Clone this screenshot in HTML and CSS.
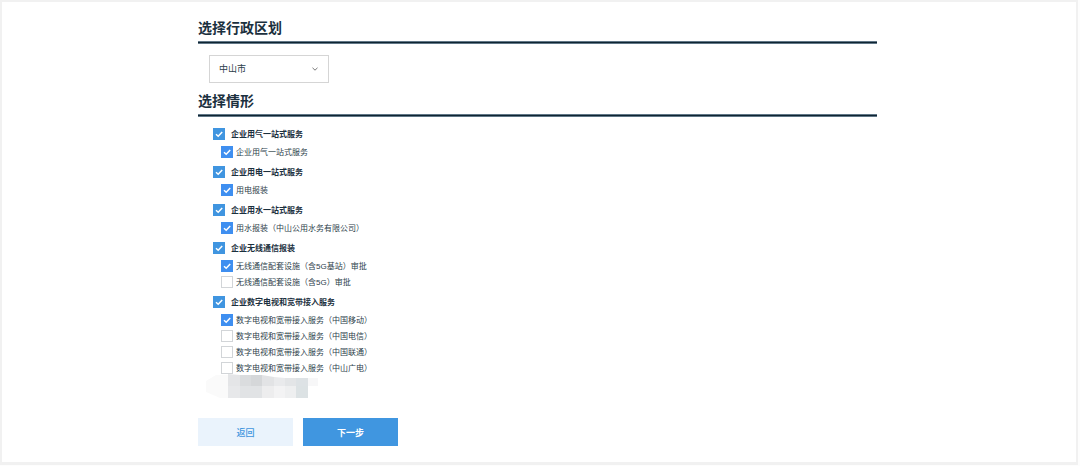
FILE: index.html
```html
<!DOCTYPE html>
<html lang="zh-CN">
<head>
    <meta charset="UTF-8">
    <meta name="viewport" content="width=device-width, initial-scale=1.0">
    <title>选择情形</title>
    <link rel="stylesheet" href="styles.css">
</head>
<body>
    <form class="panel">
        <h2 class="section-title"><label for="region">选择行政区划</label></h2>
        <div class="region">
            <select id="region" class="region-select">
                <option>中山市</option>
            </select>
            <svg class="region-arrow" viewBox="0 0 8 8"><path d="M1.5 2.8 L4 5.2 L6.5 2.8" /></svg>
        </div>

        <h2 class="section-title">选择情形</h2>
        <div class="groups">
            <div class="group">
                <label class="group-title"><input type="checkbox" class="check" checked>企业用气一站式服务</label>
                <label class="item"><input type="checkbox" class="check" checked>企业用气一站式服务</label>
            </div>
            <div class="group">
                <label class="group-title"><input type="checkbox" class="check" checked>企业用电一站式服务</label>
                <label class="item"><input type="checkbox" class="check" checked>用电报装</label>
            </div>
            <div class="group">
                <label class="group-title"><input type="checkbox" class="check" checked>企业用水一站式服务</label>
                <label class="item"><input type="checkbox" class="check" checked>用水报装（中山公用水务有限公司）</label>
            </div>
            <div class="group">
                <label class="group-title"><input type="checkbox" class="check" checked>企业无线通信报装</label>
                <label class="item"><input type="checkbox" class="check" checked>无线通信配套设施（含5G基站）审批</label>
                <label class="item"><input type="checkbox" class="check">无线通信配套设施（含5G）审批</label>
            </div>
            <div class="group">
                <label class="group-title"><input type="checkbox" class="check" checked>企业数字电视和宽带接入服务</label>
                <label class="item"><input type="checkbox" class="check" checked>数字电视和宽带接入服务（中国移动）</label>
                <label class="item"><input type="checkbox" class="check">数字电视和宽带接入服务（中国电信）</label>
                <label class="item"><input type="checkbox" class="check">数字电视和宽带接入服务（中国联通）</label>
                <label class="item"><input type="checkbox" class="check">数字电视和宽带接入服务（中山广电）</label>
            </div>
        </div>

        <!-- masked row -->
        <svg class="mosaic" viewBox="0 0 114 24">
            <path fill="#fafafa" d="M0 7 L10 1 H22 V24 H14 L0 18z" />
            <path fill="#e4e5e7" d="M22 0 L34 1 V12 H22z" />
            <path fill="#dadcde" d="M34 1 H45 V12 H34z" />
            <path fill="#d5d7d9" d="M45 1 H56 V12 H45z" />
            <path fill="#e2e3e5" d="M56 1 L68 3 V12 H56z" />
            <path fill="#e9eaec" d="M68 3 L79 4 V12 H68z" />
            <path fill="#e3e5e7" d="M79 4 H90 V12 H79z" />
            <path fill="#dde2e5" d="M90 4 H102 V12 H90z" />
            <path fill="#f7f7f8" d="M102 4 H112 V12 H102z" />
            <path fill="#e7e8ea" d="M22 12 H34 V24 H22z" />
            <path fill="#e1e3e5" d="M34 12 H56 V24 H34z" />
            <path fill="#ededee" d="M56 12 H68 V24 H56z" />
            <path fill="#f3f3f4" d="M68 12 H79 V24 H68z" />
            <path fill="#eeeff0" d="M79 12 H90 V24 H79z" />
            <path fill="#dce2e4" d="M90 12 H102 V24 H90z" />
        </svg>

        <div class="actions">
            <button type="button" class="btn btn-back">返回</button>
            <button type="button" class="btn btn-next">下一步</button>
        </div>
    </form>
</body>
</html>
```
FILE: styles.css
```css
* {
    box-sizing: border-box;
}
body {
    margin: 0;
    padding: 0 2px 1px 0;
    font-family: "Liberation Sans", "Noto Sans CJK SC", sans-serif;
    color: #1b303e;
    background: #fdfdfd;
}
.panel {
    padding: 16px 199px 16px 196px;
    border: 2px solid #f1f1f1;
    border-bottom-width: 3px;
    background: #fff;
}
.section-title {
    margin: 0;
    height: 25px;
    padding-bottom: 4px;
    font-size: 14px;
    line-height: 20px;
    border-bottom: 1px solid #0f2532;
    box-shadow: 0 1px #607686, inset 0 -1px #607686;
}
.region {
    position: relative;
    width: 120px;
    margin: 12px 0 8px 11px;
}
.region-select {
    display: block;
    width: 100%;
    height: 28px;
    padding: 0 9px;
    font: inherit;
    font-size: 9px;
    color: #2c3e4a;
    background: #fff;
    border: 1px solid #d5d5d5;
    border-radius: 0;
    appearance: none;
}
.region-arrow {
    position: absolute;
    top: 10px;
    right: 10px;
    width: 8px;
    height: 8px;
    fill: none;
    stroke: #777;
    stroke-width: 1;
    pointer-events: none;
}
.groups {
    display: flex;
    flex-direction: column;
    gap: 2px;
    padding: 8px 0 0 15px;
}
.group {
    display: flex;
    flex-direction: column;
    align-items: flex-start;
}
.group-title,
.item {
    display: flex;
    align-items: center;
    padding-bottom: 2px;
    font-size: 8px;
}
.group-title {
    gap: 6px;
    height: 20px;
    font-weight: bold;
}
.item {
    gap: 3px;
    height: 16px;
    margin-left: 8px;
    color: #2c3e4a;
}
.check {
    flex: none;
    width: 12px;
    height: 12px;
    margin: 2px 0 0;
    border: 1px solid #d2d5d8;
    background: #fff;
    appearance: none;
}
.check:checked {
    border-color: #3f8ff0;
    background: #3f8ff0 url("data:image/svg+xml,%3Csvg xmlns='http://www.w3.org/2000/svg' viewBox='0 0 10 10'%3E%3Cpath d='M2 5.2 L4.2 7.3 L8.2 3' fill='none' stroke='white' stroke-width='1.5'/%3E%3C/svg%3E") center / 10px 10px no-repeat;
}
.group-title .check:checked {
    border-color: #4095e0;
    background-color: #4095e0;
}
.mosaic {
    display: block;
    width: 114px;
    height: 24px;
    margin: -2px 0 0 8px;
}
.actions {
    display: flex;
    gap: 10px;
    margin-top: 20px;
}
.btn {
    width: 95px;
    height: 28px;
    padding: 0;
    border: none;
    font-family: inherit;
    font-size: 9px;
    font-weight: bold;
    cursor: pointer;
}
.btn-back {
    font-weight: 500;
    color: #4296de;
    background: #eaf3fc;
}
.btn-next {
    color: #fff;
    background: #4096e0;
}
```
